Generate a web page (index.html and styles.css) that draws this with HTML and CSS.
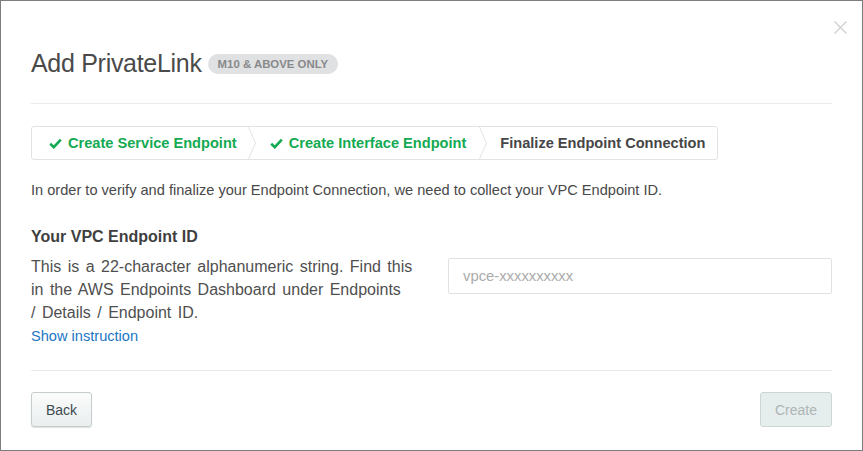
FILE: index.html
```html
<!DOCTYPE html>
<html lang="en">
<head>
<meta charset="utf-8">
<title>Add PrivateLink</title>
<link rel="stylesheet" href="styles.css">
</head>
<body>
<div class="modal">
  <button class="close" aria-label="Close">
    <svg width="13" height="13" viewBox="0 0 13 13"><path d="M0.5 0.5 L12.5 12.5 M12.5 0.5 L0.5 12.5" stroke="#cfcfcf" stroke-width="1.3" fill="none"/></svg>
  </button>
  <div class="title-row">
    <h1 class="title">Add PrivateLink</h1>
    <span class="badge">M10 &amp; ABOVE ONLY</span>
  </div>
  <hr class="rule rule-top">
  <div class="stepper">
    <div class="step done">
      <svg class="check" width="13" height="11" viewBox="0 0 13 11"><path d="M1.2 5.8 L4.8 9.2 L11.8 1.6" stroke="#13aa52" stroke-width="2.6" fill="none" stroke-linejoin="miter"/></svg>
      <span>Create Service Endpoint</span>
    </div>
    <svg class="chev" width="10" height="34" viewBox="0 0 10 34"><path d="M1 0 L8.5 17 L1 34" stroke="#e3e3e3" stroke-width="1" fill="none"/></svg>
    <div class="step done">
      <svg class="check" width="13" height="11" viewBox="0 0 13 11"><path d="M1.2 5.8 L4.8 9.2 L11.8 1.6" stroke="#13aa52" stroke-width="2.6" fill="none" stroke-linejoin="miter"/></svg>
      <span>Create Interface Endpoint</span>
    </div>
    <svg class="chev" width="10" height="34" viewBox="0 0 10 34"><path d="M1 0 L8.5 17 L1 34" stroke="#e3e3e3" stroke-width="1" fill="none"/></svg>
    <div class="step current">
      <span>Finalize Endpoint Connection</span>
    </div>
  </div>
  <p class="intro">In order to verify and finalize your Endpoint Connection, we need to collect your VPC Endpoint ID.</p>
  <h2 class="field-title">Your VPC Endpoint ID</h2>
  <div class="field-grid">
    <div class="field-desc">
      <p class="desc">This is a 22-character alphanumeric string. Find this in the AWS Endpoints Dashboard under Endpoints<br>/ Details / Endpoint ID.</p>
      <a class="link" href="#">Show instruction</a>
    </div>
    <div class="field-input">
      <input class="input" type="text" placeholder="vpce-xxxxxxxxxx">
    </div>
  </div>
  <hr class="rule rule-bottom">
  <div class="footer">
    <button class="btn">Back</button>
    <button class="btn btn-disabled" disabled>Create</button>
  </div>
</div>
</body>
</html>
```

FILE: styles.css
```css
* { box-sizing: border-box; }
html, body { margin: 0; padding: 0; background: #fff; }
body { font-family: "Liberation Sans", Arial, sans-serif; color: #494949; }

.modal {
  position: relative;
  width: 863px;
  height: 451px;
  border: 1px solid #7d7d7d;
  padding: 0 30px;
  background: #fff;
}

.close {
  position: absolute;
  top: 20px;
  right: 15px;
  width: 13px;
  height: 13px;
  padding: 0;
  border: 0;
  background: none;
  display: block;
}
.close svg { display: block; }

.title-row {
  margin-top: 47px;
  height: 30px;
  display: flex;
  align-items: center;
  gap: 6px;
}
.title {
  margin: 0;
  font-size: 25px;
  font-weight: normal;
  color: #4a4a4a;
  letter-spacing: -0.3px;
  line-height: 30px;
}
.badge {
  display: inline-block;
  height: 20px;
  line-height: 20px;
  padding: 0 10px;
  border-radius: 10px;
  background: #dfe1e2;
  color: #88898b;
  font-size: 11.4px;
  font-weight: bold;
  margin-top: 1px;
}

.rule {
  border: 0;
  height: 1px;
  background: #ebebeb;
  margin: 0;
}
.rule-top { margin-top: 25px; }

.stepper {
  margin-top: 22px;
  display: inline-flex;
  align-items: stretch;
  height: 34px;
  border: 1px solid #e3e3e3;
  border-radius: 3px;
}
.step {
  display: flex;
  align-items: center;
  gap: 6px;
  font-size: 14.6px;
  font-weight: bold;
  white-space: nowrap;
}
.step.done { color: #13aa52; }
.step.current { color: #464646; }
.step:first-child { padding: 0 10px 0 17px; }
.chev { display: block; margin-top: -1px; height: 34px; flex: none; }
.chev + .step.done { padding: 0 12px 0 13px; }
.chev + .step.current { padding: 0 12px 0 12px; }
.check { display: block; flex: none; }

.intro {
  margin: 20px 0 0;
  font-size: 14.6px;
  line-height: 20px;
  color: #494949;
}

.field-title {
  margin: 27px 0 0;
  font-size: 16px;
  font-weight: bold;
  line-height: 20px;
  color: #3f3f3f;
}

.field-grid {
  margin-top: 8px;
  display: grid;
  grid-template-columns: 382px 1fr;
  column-gap: 35px;
}
.desc {
  margin: 0;
  font-size: 16px;
  word-spacing: 2px;
  line-height: 23px;
  color: #4f4f4f;
}
.link {
  display: block;
  font-size: 14.6px;
  line-height: 23px;
  margin-top: 1px;
  color: #1b76c4;
  text-decoration: none;
}
.field-input { padding-top: 3px; }
.input {
  display: block;
  width: 100%;
  height: 36px;
  border: 1px solid #e1e1e1;
  border-radius: 2px;
  padding: 0 14px;
  font-family: "Liberation Sans", Arial, sans-serif;
  font-size: 14.8px;
  color: #494949;
  outline: none;
}
.input::placeholder { color: #ababab; }

.rule-bottom { margin-top: 22px; }

.footer {
  margin-top: 21px;
  display: flex;
  justify-content: space-between;
}
.btn {
  height: 35px;
  padding: 0 14px;
  border: 1px solid #c6cdcd;
  border-radius: 3px;
  background: linear-gradient(#fbfcfc, #e9eeee);
  box-shadow: 0 1px 1px rgba(0,0,0,0.12);
  font-family: "Liberation Sans", Arial, sans-serif;
  font-size: 14px;
  color: #3d4a4f;
}
.btn-disabled {
  background: #e6eded;
  color: #adb5b5;
  border-color: #cdd5d5;
  box-shadow: none;
  padding: 0 14px;
}
```
